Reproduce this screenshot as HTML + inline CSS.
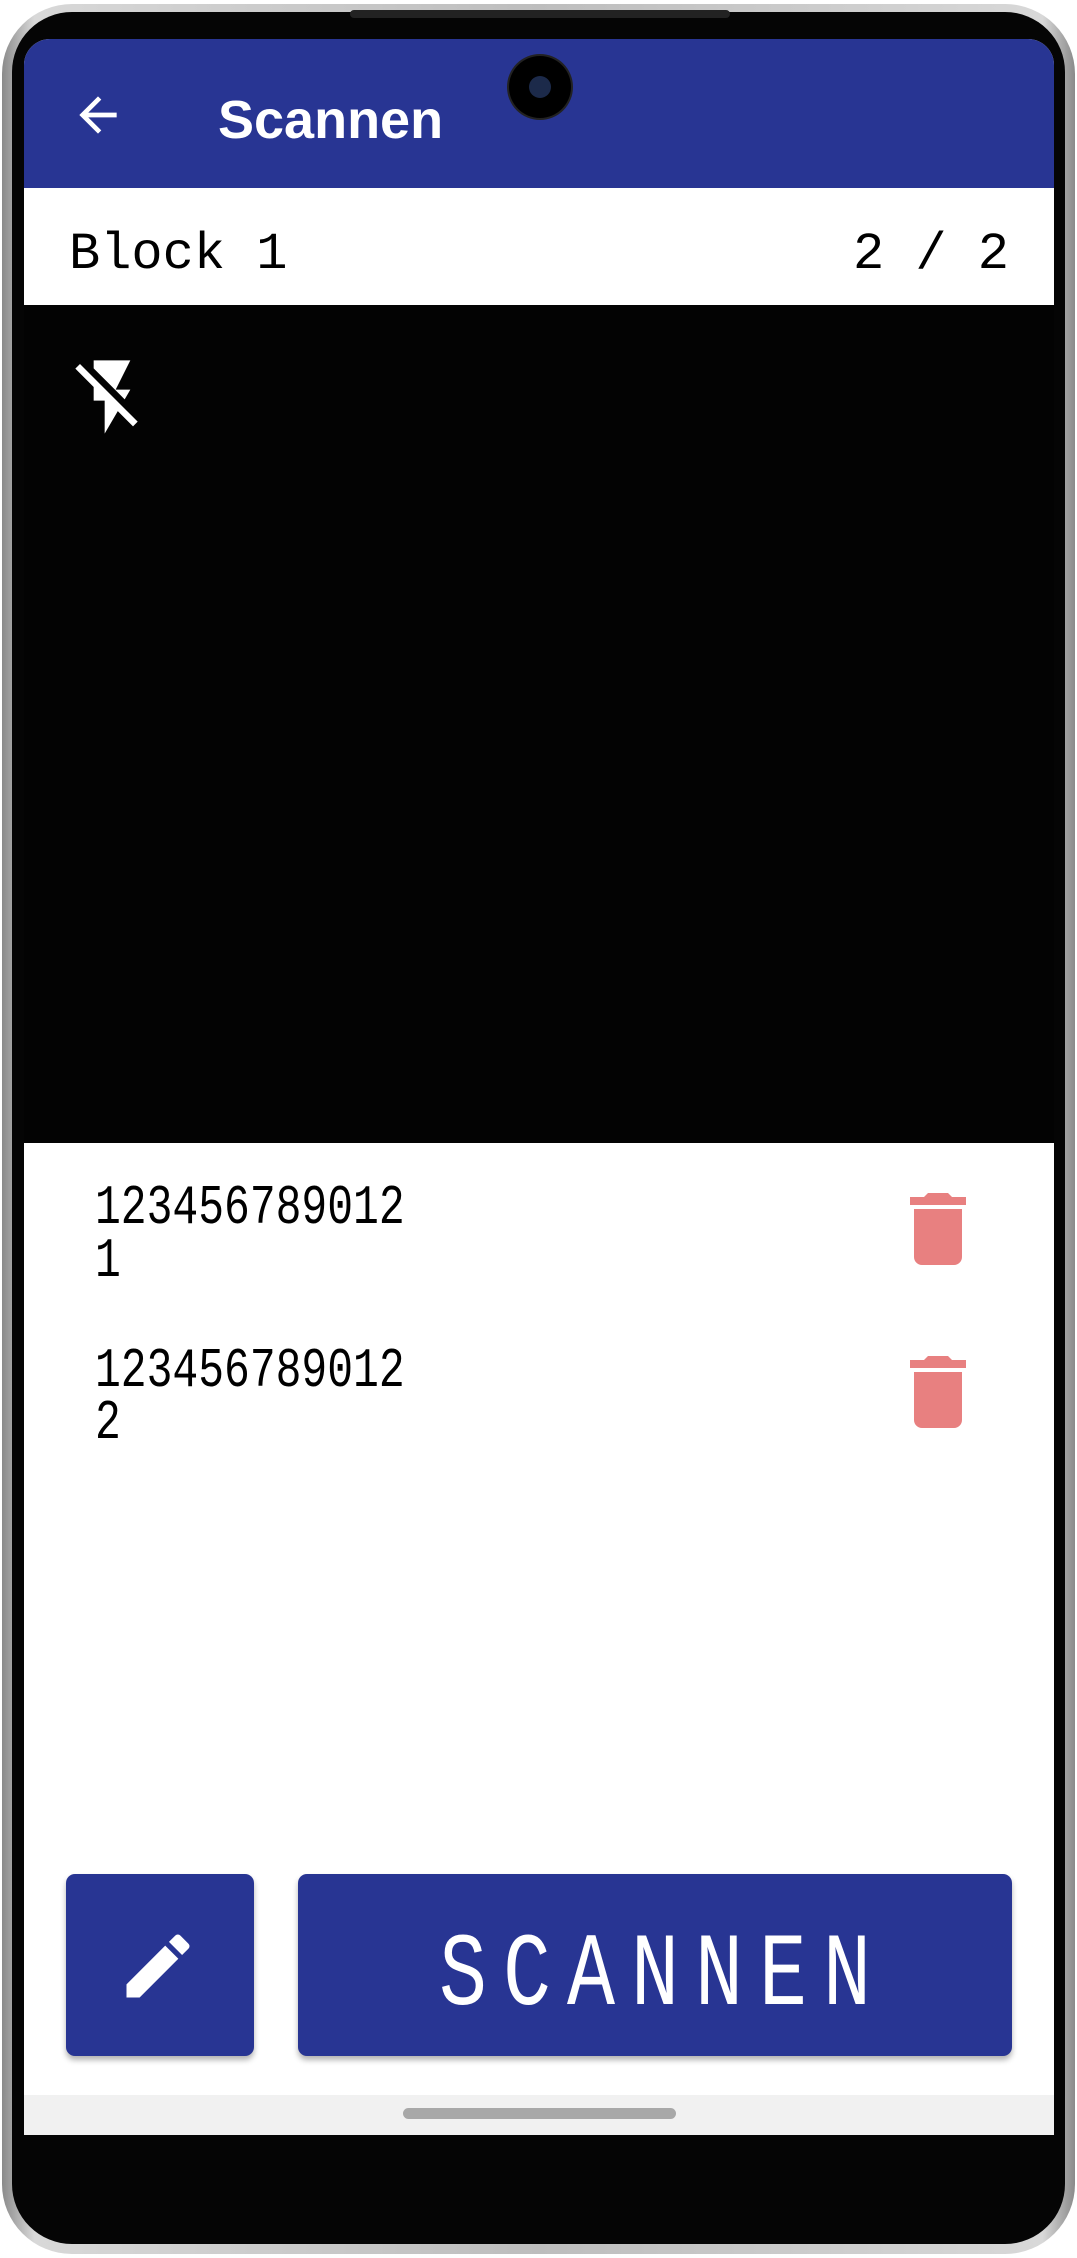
<!DOCTYPE html>
<html><head><meta charset="utf-8"><style>
*{margin:0;padding:0;box-sizing:border-box}
body{width:1077px;height:2258px;background:#fff;position:relative;overflow:hidden;font-family:"Liberation Sans",sans-serif}
.frame{position:absolute;left:2px;top:4px;width:1073px;height:2250px;border-radius:70px;background:linear-gradient(90deg,#8a8a8a,#d8d8d8 3%,#bdbdbd 50%,#d8d8d8 97%,#8a8a8a)}
.bezel{position:absolute;left:10px;top:8px;right:10px;bottom:10px;border-radius:60px;background:#050505}
.screen{position:absolute;left:24px;top:39px;width:1030px;height:2096px;background:#fff;border-radius:26px 26px 0 0;overflow:hidden}
.appbar{position:absolute;left:0;top:0;width:100%;height:149px;background:#283593}
.title{position:absolute;left:194px;top:50px;color:#fff;font-size:54px;font-weight:bold}
.cam{position:absolute;left:485px;top:17px;width:62px;height:62px;border-radius:50%;background:#000;box-shadow:0 0 0 2px #222}
.cam:after{content:"";position:absolute;left:20px;top:20px;width:22px;height:22px;border-radius:50%;background:#1c2a4a}
.hdr{position:absolute;left:0;top:149px;width:100%;height:117px;background:#fff;font-family:"Liberation Mono",monospace;font-size:52px;color:#000}
.camera{position:absolute;left:0;top:266px;width:100%;height:838px;background:#030303}
.mono{font-family:"Liberation Mono",monospace;color:#000;position:absolute;font-size:43px;transform:scaleY(1.3);transform-origin:left bottom;line-height:1}
.btn{position:absolute;top:1835px;height:182px;background:#283593;border-radius:9px;box-shadow:0 4px 6px rgba(0,0,0,.3)}
.nav{position:absolute;left:0;top:2056px;width:100%;height:40px;background:#f1f1f1}
.pill{position:absolute;left:379px;top:13px;width:273px;height:11px;border-radius:6px;background:#a8a8a8}
</style></head><body>
<div class="frame"><div class="bezel"></div></div>
<div style="position:absolute;left:350px;top:10px;width:380px;height:8px;background:#222;border-radius:4px"></div>
<div class="screen">
 <div class="appbar">
  <svg style="position:absolute;left:46px;top:48px" width="56" height="56" viewBox="0 0 24 24"><path d="M20 11H7.83l5.59-5.59L12 4l-8 8 8 8 1.41-1.41L7.83 13H20v-2z" fill="#fff"/></svg>
  <div class="title">Scannen</div>
  <div class="cam"></div>
 </div>
 <div class="hdr"><span style="position:absolute;left:45px;top:37px">Block 1</span><span style="position:absolute;right:45px;top:37px">2 / 2</span></div>
 <div class="camera">
  <svg style="position:absolute;left:44px;top:48px" width="88" height="88" viewBox="0 0 24 24"><path d="M3.27 3L2 4.27l5 5V13h3v9l3.58-6.14L17.73 20 19 18.73 3.27 3zM17 10h-4l4-8H7v2.18l8.46 8.46L17 10z" fill="#fff"/></svg>
 </div>
 <div class="mono" style="left:71px;top:1156px;height:50px">123456789012</div>
 <div class="mono" style="left:71px;top:1209px;height:50px">1</div>
 <div class="mono" style="left:71px;top:1319px;height:50px">123456789012</div>
 <div class="mono" style="left:71px;top:1371px;height:50px">2</div>
 <svg style="position:absolute;left:866px;top:1142px" width="96" height="96" viewBox="0 0 24 24" preserveAspectRatio="none"><path d="M6 19c0 1.1.9 2 2 2h8c1.1 0 2-.9 2-2V7H6v12zM19 4h-3.5l-1-1h-5l-1 1H5v2h14V4z" fill="#e88080"/></svg>
 <svg style="position:absolute;left:866px;top:1305px" width="96" height="96" viewBox="0 0 24 24" preserveAspectRatio="none"><path d="M6 19c0 1.1.9 2 2 2h8c1.1 0 2-.9 2-2V7H6v12zM19 4h-3.5l-1-1h-5l-1 1H5v2h14V4z" fill="#e88080"/></svg>
 <div class="btn" style="left:42px;width:188px">
  <svg style="position:absolute;left:50px;top:50px" width="84" height="84" viewBox="0 0 24 24"><path d="M3 17.25V21h3.75L17.81 9.94l-3.75-3.75L3 17.25zM20.71 7.04a1 1 0 000-1.41l-2.34-2.34a1 1 0 00-1.41 0l-1.83 1.83 3.75 3.75 1.83-1.83z" fill="#fff"/></svg>
 </div>
 <div class="btn" style="left:274px;width:714px">
  <div style="position:absolute;left:0;width:100%;top:44px;text-align:center;color:#fff;font-family:'Liberation Mono',monospace;font-size:80px;letter-spacing:16px;padding-left:16px;transform:scaleY(1.3);transform-origin:center top">SCANNEN</div>
 </div>
 <div class="nav"><div class="pill"></div></div>
</div>
</body></html>
